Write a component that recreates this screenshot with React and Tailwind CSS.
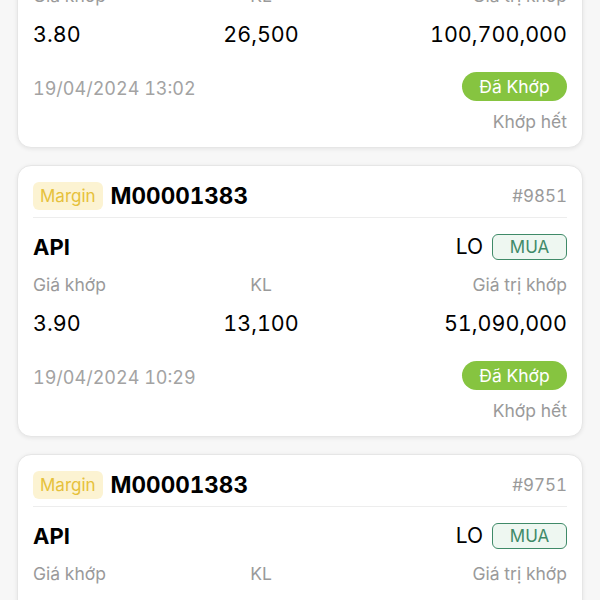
import React from "react";

const orders = [
  {
    id: "#9901",
    account: "M00001383",
    symbol: "API",
    price: "3.80",
    qty: "26,500",
    value: "100,700,000",
    time: "19/04/2024 13:02",
  },
  {
    id: "#9851",
    account: "M00001383",
    symbol: "API",
    price: "3.90",
    qty: "13,100",
    value: "51,090,000",
    time: "19/04/2024 10:29",
  },
  {
    id: "#9751",
    account: "M00001383",
    symbol: "API",
    price: "3.90",
    qty: "13,100",
    value: "51,090,000",
    time: "19/04/2024 09:47",
  },
];

function OrderCard({ order }) {
  return (
    <div className="bg-white border border-[#e6e6e6] rounded-[14px] shadow-[0_1px_4px_rgba(0,0,0,0.08)] px-[15px] pt-[16px] pb-[14px]">
      {/* header */}
      <div className="flex items-center justify-between pb-[7px] border-b border-[#ededed]">
        <div className="flex items-center gap-[8px]">
          <span className="h-[28px] px-[7px] flex items-center rounded-[6px] bg-[#fcf3d2] text-[#e6c13b] text-[17px] leading-[22px]">
            Margin
          </span>
          <span className="text-[22.5px] leading-[26px] font-bold text-black">
            {order.account}
          </span>
        </div>
        <span className="text-[17px] leading-[24px] text-[#9a9a9a]">{order.id}</span>
      </div>

      {/* symbol */}
      <div className="flex items-center justify-between mt-[16px] h-[26px]">
        <span className="text-[22px] leading-[26px] font-bold text-black">{order.symbol}</span>
        <div className="flex items-center gap-[9px]">
          <span className="text-[21px] leading-[26px] text-black">LO</span>
          <span className="h-[26px] w-[75px] flex items-center justify-center rounded-[6px] border border-[#3f8a68] bg-[#eef7f1] text-[#3f8a68] text-[17px] leading-[22px]">
            MUA
          </span>
        </div>
      </div>

      {/* matched */}
      <div className="grid grid-cols-[190px_76px_1fr] mt-[14px] text-[17.5px] leading-[22px] text-[#9a9a9a]">
        <span>Giá khớp</span>
        <span className="text-center">KL</span>
        <span className="text-right">Giá trị khớp</span>
      </div>
      <div className="grid grid-cols-[190px_76px_1fr] mt-[14px] text-[21.5px] leading-[26px] text-black">
        <span>{order.price}</span>
        <span className="text-center">{order.qty}</span>
        <span className="text-right">{order.value}</span>
      </div>

      {/* status */}
      <div className="flex items-end justify-between mt-[25px]">
        <span className="text-[18px] leading-[24px] text-[#a3a3a3]">{order.time}</span>
        <span className="h-[29px] w-[105px] flex items-center justify-center rounded-full bg-[#86c440] text-white text-[17.5px] leading-[22px]">
          Đã Khớp
        </span>
      </div>
      <div className="text-right mt-[10px] text-[17.5px] leading-[22px] text-[#9a9a9a]">
        Khớp hết
      </div>
    </div>
  );
}

export default function App() {
  return (
    <div
      className="h-[600px] overflow-hidden bg-[#f7f7f7] tabular-nums"
      style={{ fontFamily: "Inter, 'Noto Sans', sans-serif" }}
    >
      <div className="-mt-[124px] px-[17px] flex flex-col gap-[17px]">
        {orders.map((o) => (
          <OrderCard key={o.id} order={o} />
        ))}
      </div>
    </div>
  );
}
